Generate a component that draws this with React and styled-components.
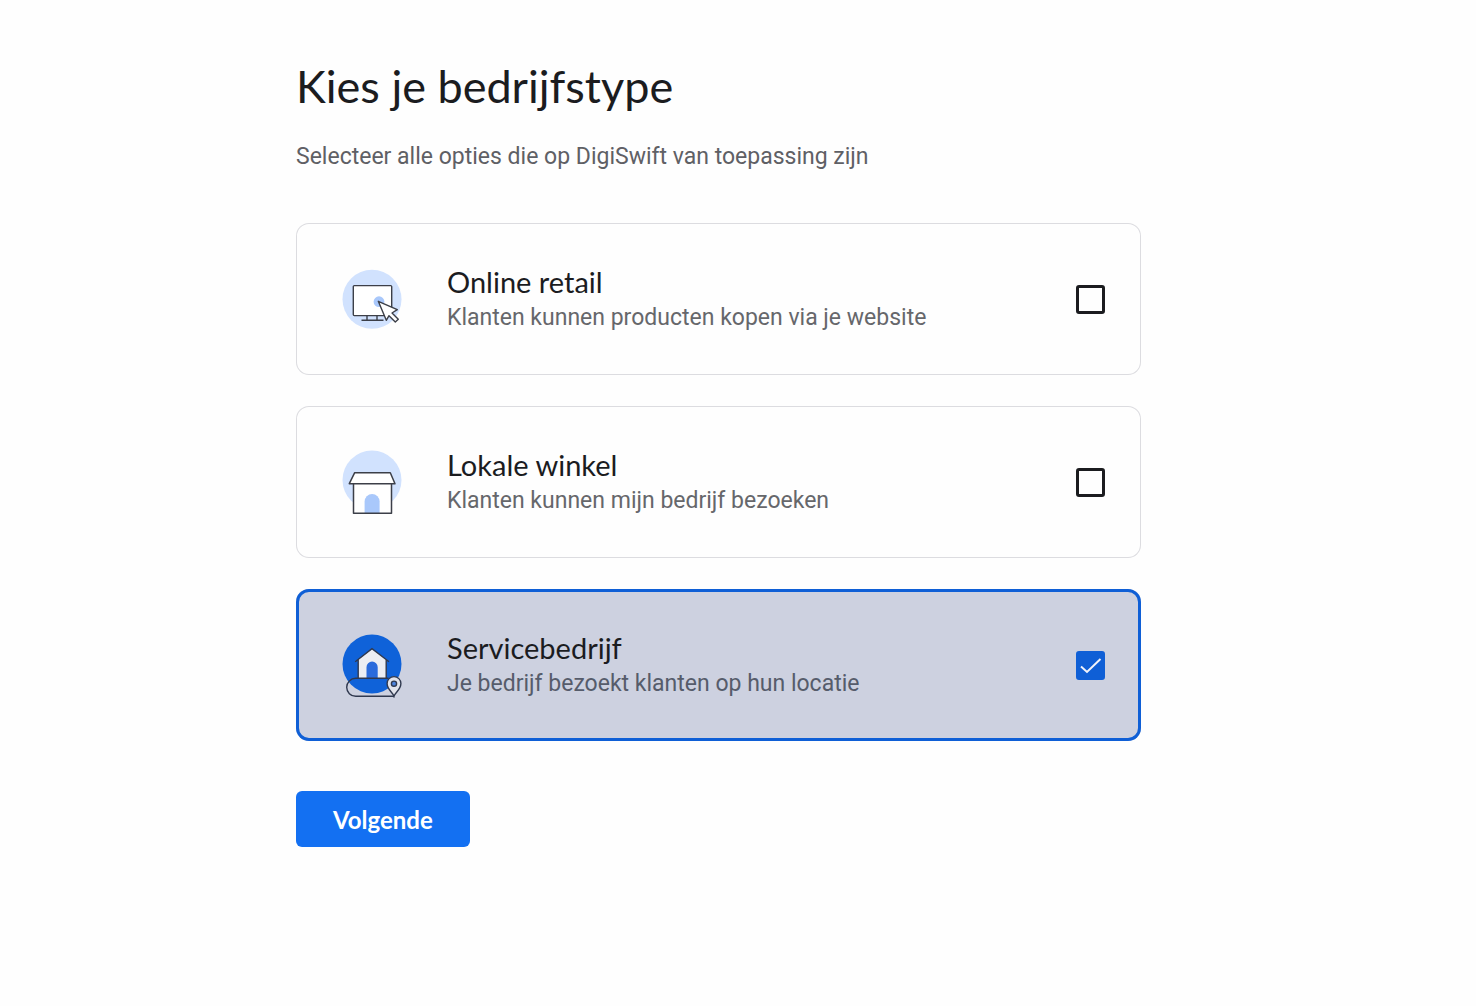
import React, { useState } from 'react';
import styled, { createGlobalStyle } from 'styled-components';

const GlobalStyle = createGlobalStyle`
  * {
    box-sizing: border-box;
  }

  body {
    margin: 0;
    background: #fefefe;
    font-family: Roboto, sans-serif;
    color: #1b1c1f;
  }
`;

const Page = styled.main`
  padding: 56px 335px 56px 296px;

  @media (max-width: 1100px) {
    padding: 56px 32px;
  }
`;

const Title = styled.h1`
  margin: 0;
  font-family: Lato, sans-serif;
  font-size: 45px;
  font-weight: 400;
  line-height: 60px;
`;

const Subtitle = styled.p`
  margin: 24px 0 49px;
  font-size: 23px;
  line-height: 34px;
  color: #5f6065;
`;

const OptionList = styled.div`
  display: flex;
  flex-direction: column;
  gap: 31px;
`;

const OptionCard = styled.label`
  display: flex;
  align-items: center;
  min-height: 152px;
  padding: 0 36px 0 46px;
  border-radius: 13px;
  background: ${({ $selected }) => ($selected ? '#cdd1e0' : '#fefefe')};
  box-shadow: inset 0 0 0 ${({ $selected }) => ($selected ? '3px #0f5fd6' : '1px #dcdce0')};
  cursor: pointer;
`;

const OptionIcon = styled.svg`
  flex: none;
  width: 60px;
  height: 66px;
  margin-right: 45px;
`;

const OptionText = styled.span`
  display: flex;
  flex: 1;
  flex-direction: column;
`;

const OptionName = styled.span`
  font-family: Lato, sans-serif;
  font-size: 29px;
  line-height: 38px;
`;

const OptionDescription = styled.span`
  font-size: 23px;
  line-height: 34px;
  color: ${({ $selected }) => ($selected ? '#565c6b' : '#66676b')};
`;

const CheckboxBox = styled.span`
  display: grid;
  flex: none;
  width: 29px;
  height: 29px;

  > * {
    grid-area: 1 / 1;
  }
`;

const Checkbox = styled.input`
  appearance: none;
  width: 29px;
  height: 29px;
  margin: 0;
  border: 3px solid #1b1c1f;
  border-radius: 3px;
  cursor: pointer;

  &:checked {
    border-color: #0f5fd6;
    background: #0f5fd6;
  }
`;

const CheckMark = styled.svg`
  width: 29px;
  height: 29px;
  pointer-events: none;
`;

const NextButton = styled.button`
  height: 56px;
  margin-top: 50px;
  padding: 0 37px;
  border: 0;
  border-radius: 6px;
  background: #1370f2;
  color: #fff;
  font-family: Lato, sans-serif;
  font-size: 24px;
  font-weight: 700;
  cursor: pointer;

  &:hover {
    background: #0f5fd6;
  }
`;

const STROKE = '#3c3f48';

function RetailIcon() {
  return (
    <OptionIcon viewBox="0 0 60 66" aria-hidden="true">
      <circle cx="30" cy="33.3" r="29.5" fill="#d1e2fe" />
      <g fill="#fff" stroke={STROKE} strokeWidth="1.4">
        <rect x="11.3" y="19.6" width="38.4" height="30" rx="1" />
        <path d="M25 49.7v4.6M35 49.7v4.6M19.5 54.3h22" />
      </g>
      <circle cx="37" cy="35.7" r="5.4" fill="#a9c8fb" />
      <path
        d="M36.3 35.3 55.3 43.7 50 47 56.3 53.3 53.3 56 47 49.7 44.3 54.3Z"
        fill="#fff"
        stroke={STROKE}
        strokeWidth="1.4"
        strokeLinejoin="round"
      />
    </OptionIcon>
  );
}

function StoreIcon() {
  return (
    <OptionIcon viewBox="0 0 60 66" aria-hidden="true">
      <circle cx="30" cy="31" r="29.5" fill="#d1e2fe" />
      <path d="M11.5 34.7h38v29.6h-38z" fill="#fff" />
      <path d="M22.6 64.3V52.5a7.5 7.5 0 0 1 15 0v11.8z" fill="#a9c8fb" />
      <g stroke={STROKE} strokeWidth="1.5" strokeLinejoin="round">
        <path d="M11.5 34.7v29.6h38V34.7" fill="none" />
        <path d="M12.7 23.7h35.6l4.7 11H7.3z" fill="#fff" />
      </g>
    </OptionIcon>
  );
}

function ServiceIcon() {
  return (
    <OptionIcon viewBox="0 0 60 66" aria-hidden="true">
      <circle cx="30" cy="32" r="29.5" fill="#0f62d9" />
      <path d="M16.2 46.3V27.4L30 17l14.2 10.4v18.9z" fill="#eceef3" />
      <path d="M24.5 46.3V35.2a5.6 5.6 0 0 1 11.2 0v11.1z" fill="#2a6bdc" />
      <g fill="none" stroke="#30394f" strokeWidth="1.4">
        <path d="M13.2 29.7 30 16.7l17 13M16.2 27.6v18.7M44.2 27.6v18.7" />
        {/* the road stays open over the lower part of the circle */}
        <path d="M46.5 46.3H13.7a9 9 0 0 0 0 18H52" />
        <path
          d="M52 64.3C51 60.5 45.1 57.7 45.1 51.5a6.9 6.9 0 0 1 13.8 0C58.9 57.7 53 60.5 52 64.3z"
          fill="#e2e4ec"
        />
        <circle cx="52" cy="51.7" r="2.6" fill="#4d84dc" />
      </g>
    </OptionIcon>
  );
}

const options = [
  {
    id: 'retail',
    name: 'Online retail',
    description: 'Klanten kunnen producten kopen via je website',
    Icon: RetailIcon,
  },
  {
    id: 'store',
    name: 'Lokale winkel',
    description: 'Klanten kunnen mijn bedrijf bezoeken',
    Icon: StoreIcon,
  },
  {
    id: 'service',
    name: 'Servicebedrijf',
    description: 'Je bedrijf bezoekt klanten op hun locatie',
    Icon: ServiceIcon,
  },
];

function BusinessOption({ option, selected, onToggle }) {
  const { id, name, description, Icon } = option;

  return (
    <OptionCard htmlFor={id} $selected={selected}>
      <Icon />
      <OptionText>
        <OptionName>{name}</OptionName>
        <OptionDescription $selected={selected}>{description}</OptionDescription>
      </OptionText>
      <CheckboxBox>
        <Checkbox id={id} type="checkbox" checked={selected} onChange={() => onToggle(id)} />
        {selected && (
          <CheckMark viewBox="0 0 29 29" aria-hidden="true">
            <path d="M5 15.5 11 21 24.5 8" fill="none" stroke="#f1f3fa" strokeWidth="2" />
          </CheckMark>
        )}
      </CheckboxBox>
    </OptionCard>
  );
}

function App() {
  const [selected, setSelected] = useState(['service']);

  const toggle = (id) => {
    setSelected((current) =>
      current.includes(id) ? current.filter((item) => item !== id) : [...current, id]
    );
  };

  return (
    <>
      <GlobalStyle />
      <Page>
        <Title>Kies je bedrijfstype</Title>
        <Subtitle>Selecteer alle opties die op DigiSwift van toepassing zijn</Subtitle>
        <OptionList>
          {options.map((option) => (
            <BusinessOption
              key={option.id}
              option={option}
              selected={selected.includes(option.id)}
              onToggle={toggle}
            />
          ))}
        </OptionList>
        <NextButton type="button">Volgende</NextButton>
      </Page>
    </>
  );
}

export default App;
